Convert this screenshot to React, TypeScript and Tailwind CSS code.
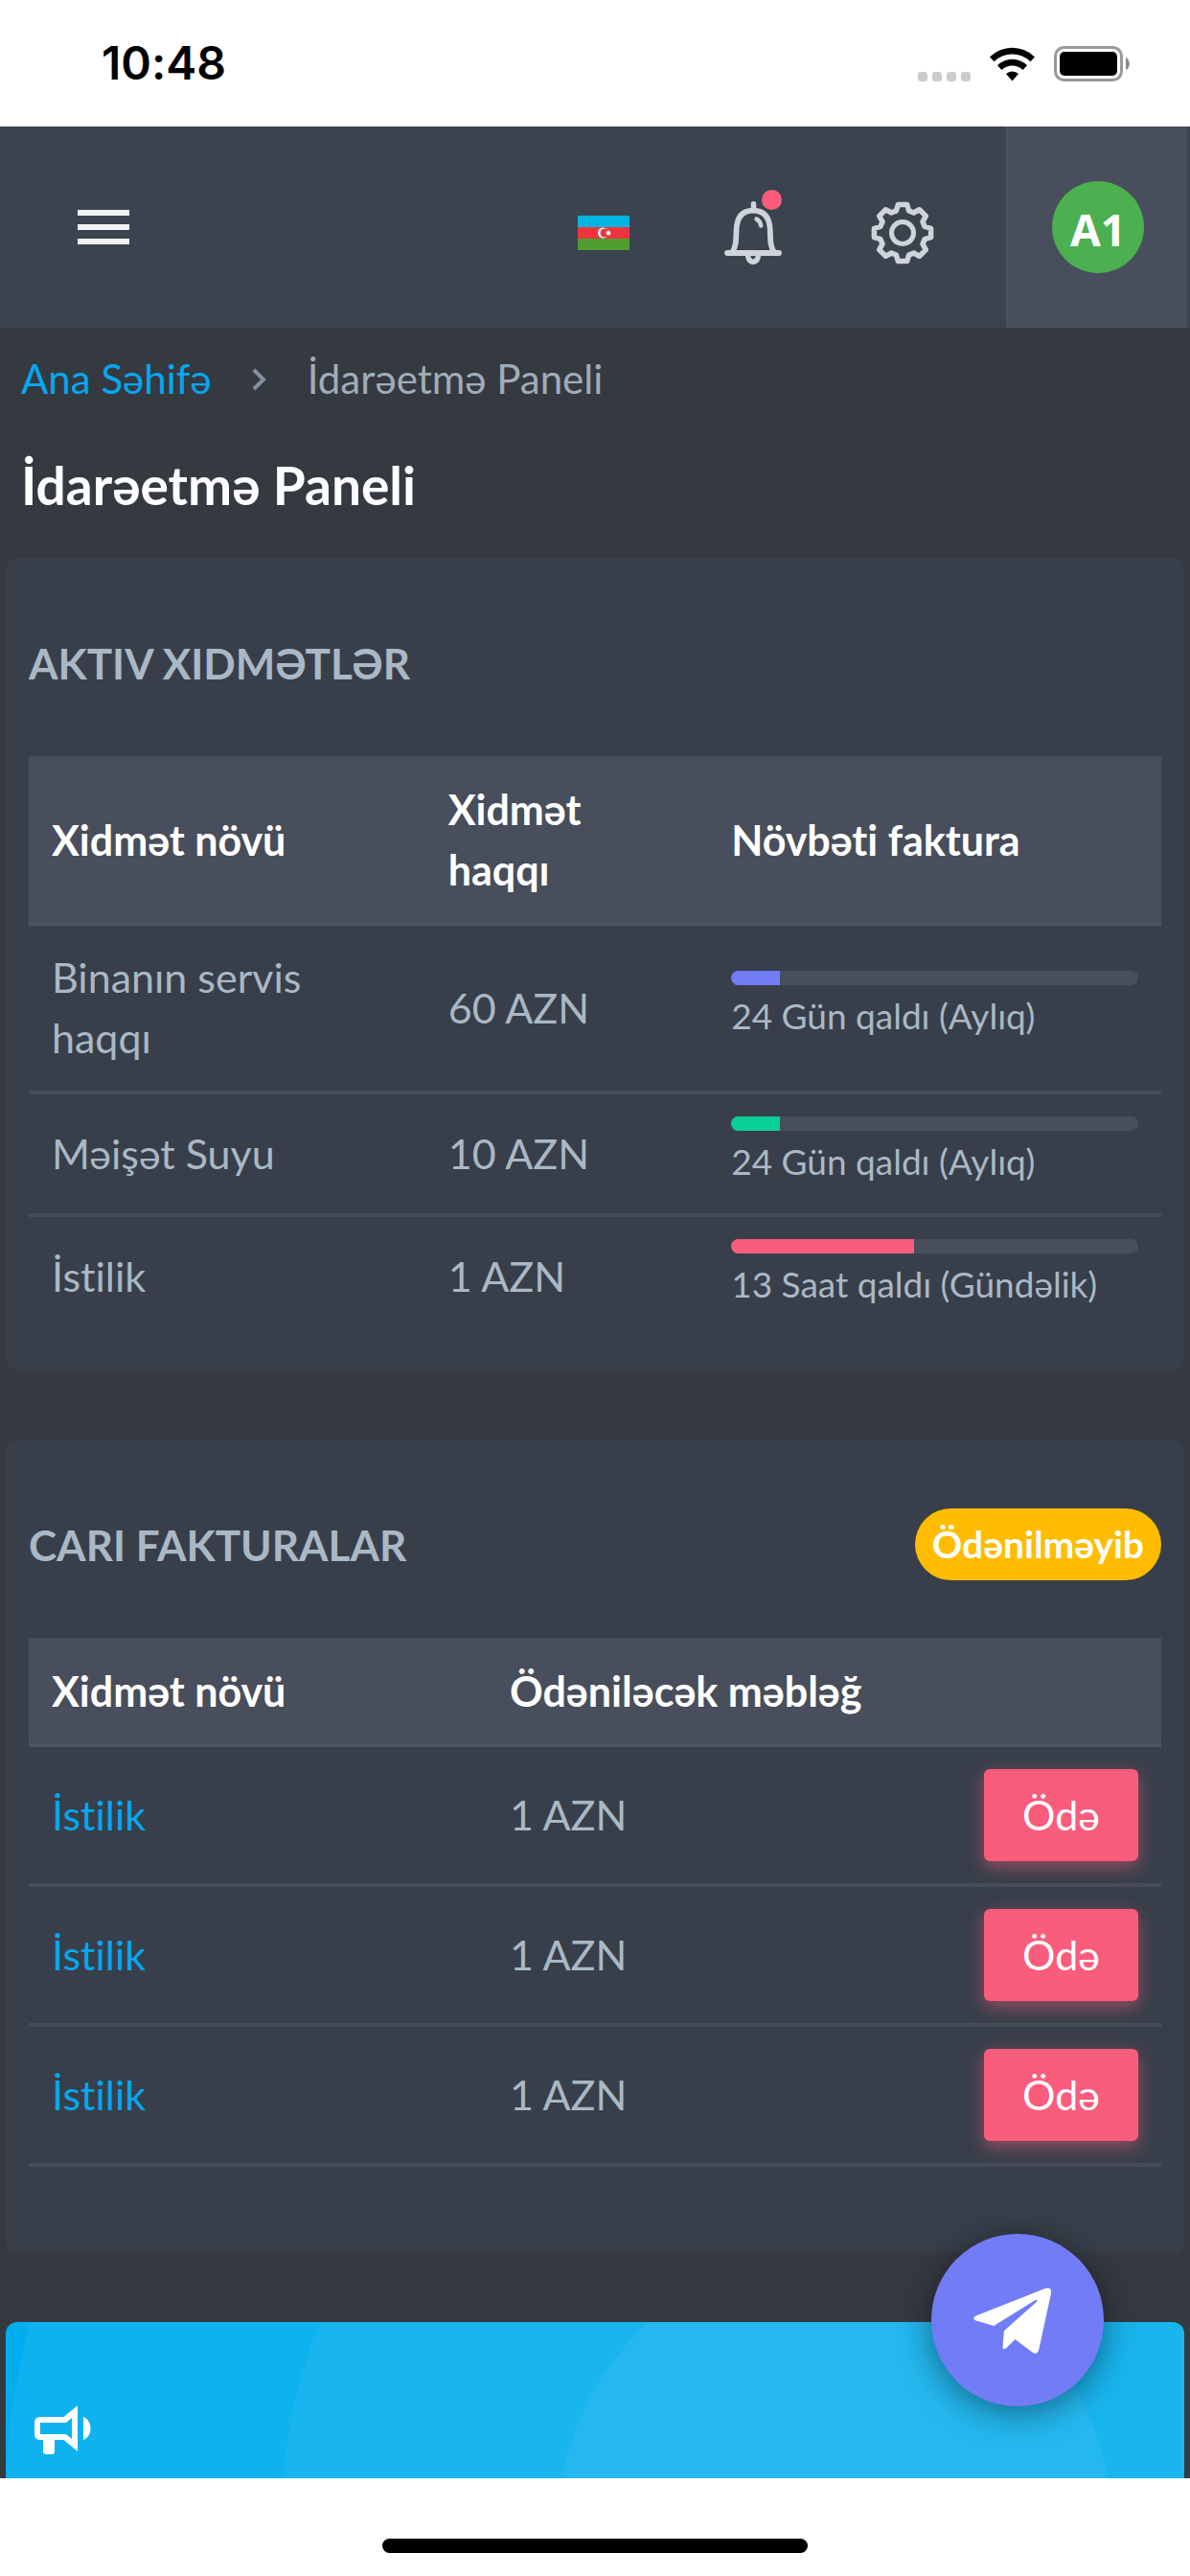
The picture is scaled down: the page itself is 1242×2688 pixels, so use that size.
import React from "react"

const services = [
  { name: "Binanın servis haqqı", fee: "60 AZN", left: "24 Gün qaldı (Aylıq)", percent: 12, color: "bg-[#727cf5]" },
  { name: "Məişət Suyu", fee: "10 AZN", left: "24 Gün qaldı (Aylıq)", percent: 12, color: "bg-[#0acf97]" },
  { name: "İstilik", fee: "1 AZN", left: "13 Saat qaldı (Gündəlik)", percent: 45, color: "bg-[#fa5c7c]" },
]

const invoices = [
  { id: 1, name: "İstilik", amount: "1 AZN" },
  { id: 2, name: "İstilik", amount: "1 AZN" },
  { id: 3, name: "İstilik", amount: "1 AZN" },
]

// outline of an eight-toothed gear around (33, 33)
const gearPoints = Array.from({ length: 8 }, (_, i) =>
  [
    [-16, 24],
    [-9, 30],
    [9, 30],
    [16, 24],
  ]
    .map(([offset, radius]) => {
      const angle = ((i * 45 + offset) * Math.PI) / 180
      return `${(33 + radius * Math.sin(angle)).toFixed(1)},${(33 - radius * Math.cos(angle)).toFixed(1)}`
    })
    .join(" ")
).join(" ")

const WifiIcon: React.FC = () => (
  <svg width="47" height="36" viewBox="0 0 47 36" aria-hidden="true">
    <path d="M0 10.5a33.5 33.5 0 0 1 47 0l-4.5 4.8a27 27 0 0 0-38 0z" />
    <path d="M8 19.2a22 22 0 0 1 31 0l-4.5 4.8a15.5 15.5 0 0 0-22 0z" />
    <path d="M17 28a9.5 9.5 0 0 1 13 0l-6.5 7.5z" />
  </svg>
)

const BatteryIcon: React.FC = () => (
  <svg width="80" height="37" viewBox="0 0 80 37" aria-hidden="true">
    <rect x="1.5" y="1.5" width="69" height="34" rx="9" fill="none" stroke="#999" strokeWidth="3" />
    <rect x="6" y="6" width="60" height="25" rx="5" />
    <path d="M75 12c5 2 5 11 0 13z" fill="#888" />
  </svg>
)

const FlagIcon: React.FC = () => (
  <svg width="54" height="36" viewBox="0 0 54 36" aria-hidden="true">
    <path fill="#00b5e2" d="M0 0h54v12H0z" />
    <path fill="#ef3340" d="M0 12h54v12H0z" />
    <path fill="#509e2f" d="M0 24h54v12H0z" />
    <circle cx="26.5" cy="18" r="5.5" fill="#fff" />
    <circle cx="28" cy="18" r="4.5" fill="#ef3340" />
    <path
      fill="#fff"
      d="M32 15l.7 1.4 1.5-.5-.5 1.5 1.3.6-1.3.7.5 1.5-1.5-.5L32 21l-.7-1.3-1.5.5.5-1.5L29 18l1.3-.6-.5-1.5 1.5.5z"
    />
  </svg>
)

const BellIcon: React.FC = () => (
  <svg width="60" height="66" viewBox="0 0 60 66" fill="none" stroke="#ced4da" strokeLinecap="round" aria-hidden="true">
    <path strokeWidth="5.5" d="M30.5 2.8V8" />
    <path
      strokeWidth="5.8"
      d="M8 53.5C12 48 12.3 42 12.5 31C12.8 17 18.5 9.7 30 9.7C41.5 9.7 47.5 17 47.8 31C48 42 48.3 48 52 53.5"
    />
    <path strokeWidth="5.8" d="M3 54h54" />
    <path strokeWidth="5.5" strokeLinecap="butt" d="M24.5 55c0 5 2 8.2 5.5 8.2s5.5-3.2 5.5-8.2" />
    <path strokeWidth="4.5" d="M33.5 18.5c2.7 1.5 4.3 4 4.7 7" />
  </svg>
)

const GearIcon: React.FC = () => (
  <svg width="66" height="66" viewBox="0 0 66 66" fill="none" stroke="#ced4da" strokeLinejoin="round" aria-hidden="true">
    <polygon strokeWidth="5.5" points={gearPoints} />
    <circle cx="33" cy="33" r="11.5" strokeWidth="5" />
  </svg>
)

const MegaphoneIcon: React.FC = () => (
  <svg width="59" height="51" viewBox="0 0 59 51" fill="#fff" aria-hidden="true">
    <path
      fillRule="evenodd"
      d="M6 12H30.5L45 0V48L30.5 36H6Q0 36 0 30V18Q0 12 6 12ZM6 18V30H33L39 35V13L33 18Z"
    />
    <path d="M9 34h12v14q0 3-3 3h-6q-3 0-3-3z" />
    <path d="M51 12c10 4 10 20 0 24z" />
  </svg>
)

const PlaneIcon: React.FC = () => (
  <svg width="81" height="69" viewBox="0 0 244 207" fill="#fff" aria-hidden="true">
    <path d="M6 89L227 2Q246-4 244 18L206 193Q201 213 186 204L131 162L103 190Q92 198 92 186L96 136L199 44Q204 37 195 39L64 120L6 103Q-5 96 6 89Z" />
  </svg>
)

const StatusBar: React.FC = () => (
  <div className="flex h-[132px] items-center bg-white pr-[62px] pl-[106px] text-black">
    <time className="font-['Inter',sans-serif] text-5xl leading-none font-semibold">10:48</time>
    <div className="ml-auto flex items-end gap-5">
      <div className="flex gap-[5px]">
        <span className="size-2.5 rounded-[3px] bg-[#ccc]"></span>
        <span className="size-2.5 rounded-[3px] bg-[#ccc]"></span>
        <span className="size-2.5 rounded-[3px] bg-[#ccc]"></span>
        <span className="size-2.5 rounded-[3px] bg-[#ccc]"></span>
      </div>
      <WifiIcon />
      <BatteryIcon />
    </div>
  </div>
)

const TopBar: React.FC = () => (
  <header className="flex h-[210px] items-center bg-[#3b444e] pr-[3px] pl-[81px]">
    <button type="button" aria-label="Menyu" className="flex flex-col gap-[9px]">
      <span className="h-1.5 w-[54px] bg-[#f1f1f1]"></span>
      <span className="h-1.5 w-[54px] bg-[#f1f1f1]"></span>
      <span className="h-1.5 w-[54px] bg-[#f1f1f1]"></span>
    </button>
    <div className="ml-auto flex items-center pt-3">
      <button type="button" aria-label="Dil" className="mr-[99px]">
        <FlagIcon />
      </button>
      <button type="button" aria-label="Bildirişlər" className="relative mr-[93px]">
        <BellIcon />
        <span className="absolute -top-3 right-0 size-[21px] rounded-full bg-[#fa5c7c]"></span>
      </button>
      <button type="button" aria-label="Parametrlər" className="mr-[75px]">
        <GearIcon />
      </button>
    </div>
    <button
      type="button"
      className="flex w-[189px] items-center justify-center self-stretch border-l-[3px] border-[#4b535f] bg-[#484e5c]"
    >
      <span className="flex size-24 items-center justify-center rounded-full bg-[#4caf50] pt-1 font-['Noto_Sans',sans-serif] text-[46px] leading-none font-bold text-white">
        A1
      </span>
    </button>
  </header>
)

const Card: React.FC<{ title: string; badge?: string; className: string; children: React.ReactNode }> = ({
  title,
  badge,
  className,
  children,
}) => (
  <section className={`mx-1.5 rounded-xl bg-[#383f4a] px-6 pt-[72px] ${className}`}>
    <div className="mb-[60px] flex h-[75px] items-center justify-between">
      <h2 className="text-[44px] leading-none font-bold">{title}</h2>
      {badge && (
        <span className="rounded-full bg-[#ffbc00] px-[18px] text-[39px] leading-[75px] font-bold text-white">{badge}</span>
      )}
    </div>
    {children}
  </section>
)

const Th: React.FC<{ className?: string; children?: React.ReactNode }> = ({ className = "", children }) => (
  <th className={`border-b-4 border-[#4c5460] bg-[#484e5b] px-6 pt-6 pb-[23px] text-left font-bold text-white ${className}`}>
    {children}
  </th>
)

const ServicesTable: React.FC = () => (
  <table className="w-full table-fixed border-separate border-spacing-0 text-[43px] leading-[63px]">
    <thead>
      <tr>
        <Th className="w-[35%]">Xidmət növü</Th>
        <Th className="w-[25%]">
          <span className="block max-w-[200px]">Xidmət haqqı</span>
        </Th>
        <Th className="w-[40%]">Növbəti faktura</Th>
      </tr>
    </thead>
    <tbody className="[&>tr:not(:last-child)>td]:border-b-4">
      {services.map((service) => (
        <tr key={service.name}>
          <td className="border-[#464d59] px-6 pt-[22px] pb-6">
            <span className="block max-w-[300px]">{service.name}</span>
          </td>
          <td className="border-[#464d59] px-6 pt-[22px] pb-6">{service.fee}</td>
          <td className="border-[#464d59] px-6 py-[23px]">
            <div className="h-[15px] overflow-hidden rounded-full bg-[#484e5b]">
              <div className={`h-full ${service.color}`} style={{ width: `${service.percent}%` }}></div>
            </div>
            <small className="block text-[37px]">{service.left}</small>
          </td>
        </tr>
      ))}
    </tbody>
  </table>
)

const InvoicesTable: React.FC = () => (
  <table className="w-full table-fixed border-separate border-spacing-0 text-[43px] leading-[63px]">
    <thead>
      <tr>
        <Th className="w-[478px]">Xidmət növü</Th>
        <Th>Ödəniləcək məbləğ</Th>
        <Th className="w-[209px]" />
      </tr>
    </thead>
    <tbody>
      {invoices.map((invoice) => (
        <tr key={invoice.id}>
          <td className="border-b-4 border-[#464d59] px-6 pt-[22px] pb-6">
            <a href="#" className="text-[#02a8f0]">
              {invoice.name}
            </a>
          </td>
          <td className="border-b-4 border-[#464d59] px-6 pt-[22px] pb-6">{invoice.amount}</td>
          <td className="border-b-4 border-[#464d59] px-6 py-[23px]">
            <button
              type="button"
              className="block w-full rounded-md bg-[#fa5c7c] pt-4 pb-[17px] text-white shadow-[0_6px_18px_rgba(250,92,124,0.5)]"
            >
              Ödə
            </button>
          </td>
        </tr>
      ))}
    </tbody>
  </table>
)

const Announcement: React.FC = () => (
  <section className="relative mx-1.5 mt-[72px] min-h-[162px] flex-1 overflow-hidden rounded-t-xl bg-[#00aeef] px-[30px] pt-[87px]">
    <svg
      className="absolute inset-0 h-full w-full"
      viewBox="0 0 1230 162"
      preserveAspectRatio="xMidYMin slice"
      fill="#fff"
      fillOpacity="0.05"
      aria-hidden="true"
    >
      <circle cx="864" cy="212" r="862" />
      <circle cx="864" cy="212" r="575" />
      <circle cx="864" cy="212" r="287" />
    </svg>
    <div className="relative">
      <MegaphoneIcon />
    </div>
  </section>
)

export default function App() {
  return (
    <div className="flex min-h-screen flex-col bg-[#353a41] font-['Lato','Noto_Sans',sans-serif] text-[#aab8c5] [font-variant-ligatures:none]">
      <StatusBar />
      <TopBar />
      <main className="relative flex flex-1 flex-col">
        <nav className="flex items-center px-[22px] pt-[22px] text-[42px] leading-[63px]">
          <a href="#" className="text-[#02a8f0]">
            Ana Səhifə
          </a>
          <svg
            className="mx-[42px]"
            width="16"
            height="24"
            viewBox="0 0 16 24"
            fill="none"
            stroke="#8391a2"
            strokeWidth="4"
            aria-hidden="true"
          >
            <path d="M2 2l10 10L2 22" />
          </svg>
          <span className="text-[#a1acb9]">İdarəetmə Paneli</span>
        </nav>
        <h1 className="mt-[42px] mb-[38px] px-[22px] text-[55px] leading-[75px] font-bold text-white">İdarəetmə Paneli</h1>
        <Card title="AKTIV XIDMƏTLƏR" className="pb-9">
          <ServicesTable />
        </Card>
        <Card title="CARI FAKTURALAR" badge="Ödənilməyib" className="mt-[72px] pb-[90px]">
          <InvoicesTable />
        </Card>
        <Announcement />
        <button
          type="button"
          aria-label="Telegram"
          className="absolute right-[90px] bottom-[75px] flex size-[180px] items-center justify-center rounded-full bg-[#727cf5] pr-3 shadow-[0_6px_36px_rgba(0,0,0,0.45)]"
        >
          <PlaneIcon />
        </button>
      </main>
      <footer className="flex h-[102px] items-end justify-center bg-white pb-6">
        <div className="h-[15px] w-[444px] rounded-full bg-black"></div>
      </footer>
    </div>
  )
}
